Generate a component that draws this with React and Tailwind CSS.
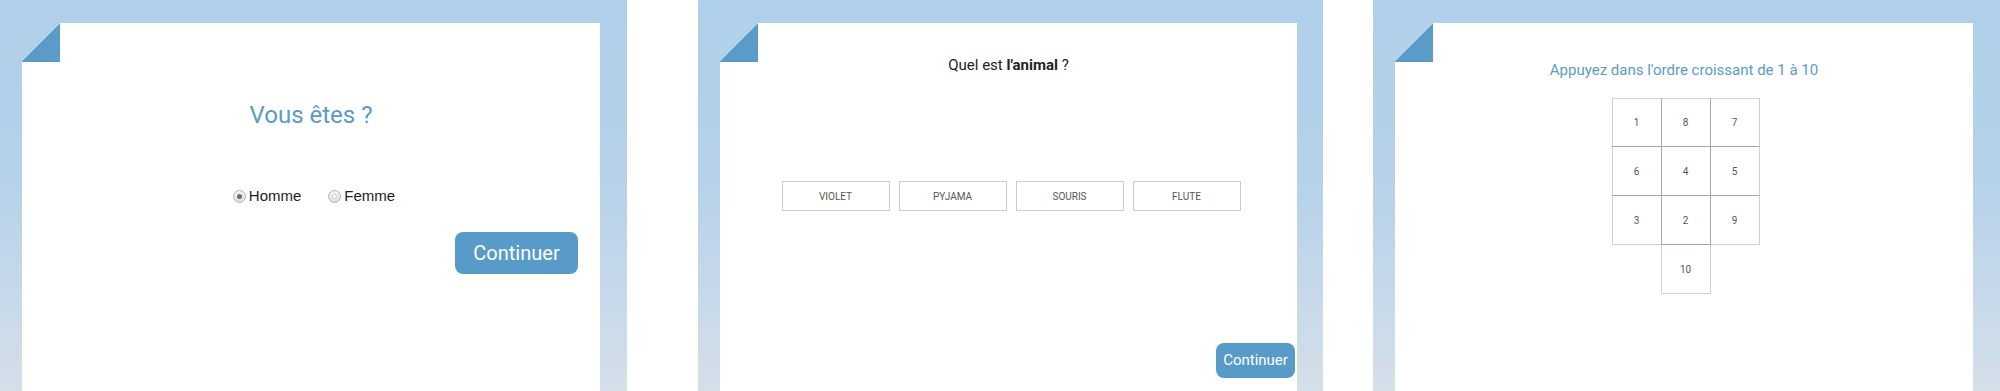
import React from "react";

const bg = "bg-[linear-gradient(to_bottom,#b0cfea_0%,#b5d1ea_45%,#d4dfe9_100%)]";
const fold = "absolute top-0 left-0 w-[38px] h-[39px] bg-[linear-gradient(to_bottom_right,#b1d0ea_50%,#5a9bc7_50%)]";
const roboto = { fontFamily: "Roboto, 'Noto Sans', sans-serif" };

function Radio({ checked }) {
  return (
    <span className="w-[13px] h-[13px] rounded-full border border-[#b3b3b3] bg-[linear-gradient(to_bottom,#f4f4f4,#dedede)] flex items-center justify-center">
      {checked ? (
        <span className="w-[5px] h-[5px] rounded-full bg-[#6d6d6d]" />
      ) : (
        <span className="w-[5px] h-[5px] rounded-full border border-[#cfcfcf] bg-white" />
      )}
    </span>
  );
}

function Panel1() {
  return (
    <div className={`w-[627px] h-full pt-[23px] pl-[22px] pr-[27px] ${bg}`}>
      <div className="relative h-full bg-white flex flex-col" style={roboto}>
        <div className={fold} />
        <div className="mt-[78px] text-center text-[24px] leading-[28px] text-[#5a9bc8]">Vous êtes ?</div>
        <div
          className="mt-[57px] flex justify-center gap-[27px] pl-[6px] text-[15px] leading-[20px] text-[#1d1d1d]"
          style={{ fontFamily: "'Liberation Sans', Arial, sans-serif" }}
        >
          <label className="flex items-center gap-[3px]">
            <Radio checked />
            <span>Homme</span>
          </label>
          <label className="flex items-center gap-[3px]">
            <Radio />
            <span>Femme</span>
          </label>
        </div>
        <div className="mt-[26px] flex justify-end pr-[22px]">
          <button className="w-[123px] h-[42px] rounded-[8px] bg-[#599bc8] text-white text-[20px] flex items-center justify-center">
            Continuer
          </button>
        </div>
      </div>
    </div>
  );
}

function Panel2() {
  const words = ["VIOLET", "PYJAMA", "SOURIS", "FLUTE"];
  return (
    <div className={`w-[625px] h-full pt-[23px] pl-[22px] pr-[26px] ${bg}`}>
      <div className="relative h-full bg-white flex flex-col" style={roboto}>
        <div className={fold} />
        <div className="mt-[32px] text-center text-[15px] leading-[20px] text-[#222]">
          Quel est <b className="font-bold">l'animal</b> ?
        </div>
        <div className="mt-[106px] flex justify-center gap-[9px] pl-[5px]">
          {words.map((w) => (
            <div
              key={w}
              className="w-[108px] h-[30px] border border-[#c9cdd0] flex items-center justify-center text-[10px] text-[#555]"
            >
              {w}
            </div>
          ))}
        </div>
        <div className="mt-[132px] flex justify-end pr-[2px]">
          <button className="w-[79px] h-[35px] rounded-[8px] bg-[#599bc8] text-white text-[15px] flex items-center justify-center">
            Continuer
          </button>
        </div>
      </div>
    </div>
  );
}

function Panel3() {
  const L = "#cdd1d4";
  const cells = [
    { n: "1", c: "w-[50px] h-[49px] border-l border-t border-r border-b border-l-[#cdd1d4] border-t-[#cdd1d4] border-r-[#a3a7aa] border-b-[#90a9bc]" },
    { n: "8", c: "w-[49px] h-[49px] border-t border-r border-b border-t-[#cdd1d4] border-r-[#a3a7aa] border-b-[#90a9bc]" },
    { n: "7", c: "w-[49px] h-[49px] border-t border-r border-b border-t-[#cdd1d4] border-r-[#cdd1d4] border-b-[#90a9bc]" },
    { n: "6", c: "w-[50px] h-[49px] border-l border-r border-b border-l-[#cdd1d4] border-r-[#a3a7aa] border-b-[#90a9bc]" },
    { n: "4", c: "w-[49px] h-[49px] border-r border-b border-r-[#a3a7aa] border-b-[#90a9bc]" },
    { n: "5", c: "w-[49px] h-[49px] border-r border-b border-r-[#cdd1d4] border-b-[#90a9bc]" },
    { n: "3", c: "w-[50px] h-[49px] border-l border-r border-b border-l-[#cdd1d4] border-r-[#a3a7aa] border-b-[#cdd1d4]" },
    { n: "2", c: "w-[49px] h-[49px] border-r border-b border-r-[#a3a7aa] border-b-[#90a9bc]" },
    { n: "9", c: "w-[49px] h-[49px] border-r border-b border-r-[#cdd1d4] border-b-[#cdd1d4]" },
    { n: "", c: "w-[50px] h-[49px] border-r border-r-[#cdd1d4]" },
    { n: "10", c: "w-[49px] h-[49px] border-r border-b border-r-[#cdd1d4] border-b-[#cdd1d4]" },
  ];
  void L;
  return (
    <div className={`w-[627px] h-full pt-[23px] pl-[22px] pr-[27px] ${bg}`}>
      <div className="relative h-full bg-white flex flex-col items-center" style={roboto}>
        <div className={fold} />
        <div className="mt-[37px] text-center text-[15px] leading-[20px] text-[#5a9bc8]">
          Appuyez dans l'ordre croissant de 1 à 10
        </div>
        <div className="mt-[18px] ml-[3px] grid grid-cols-[50px_49px_49px]">
          {cells.map((cell, i) => (
            <div key={i} className={`${cell.c} flex items-center justify-center text-[10px] text-[#555]`}>
              {cell.n}
            </div>
          ))}
        </div>
      </div>
    </div>
  );
}

export default function App() {
  return (
    <div className="w-[2000px] h-[391px] bg-white flex overflow-hidden">
      <Panel1 />
      <div className="ml-[71px] h-full">
        <Panel2 />
      </div>
      <div className="ml-[50px] h-full">
        <Panel3 />
      </div>
    </div>
  );
}
